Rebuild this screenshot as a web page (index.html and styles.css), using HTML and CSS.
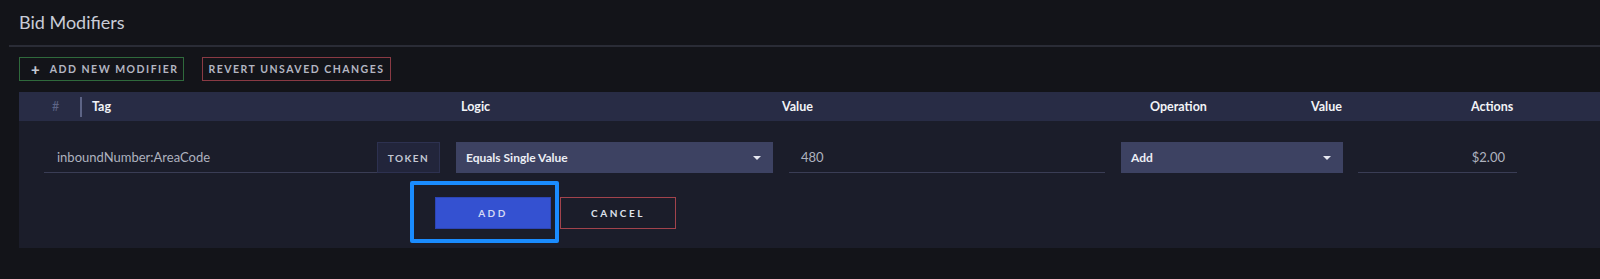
FILE: index.html
```html
<!DOCTYPE html>
<html>
<head>
<meta charset="utf-8">
<link rel="stylesheet" href="styles.css">
</head>
<body>
<div class="page">
  <h1 class="title">Bid Modifiers</h1>
  <div class="rule"></div>
  <div class="toolbar">
    <button class="btn btn-green"><span class="plus">+</span>ADD NEW MODIFIER</button>
    <button class="btn btn-red">REVERT UNSAVED CHANGES</button>
  </div>
  <div class="table">
    <div class="thead">
      <div class="th th-num">#</div>
      <div class="th-div"></div>
      <div class="th th-tag">Tag</div>
      <div class="th th-logic">Logic</div>
      <div class="th th-value">Value</div>
      <div class="th th-op">Operation</div>
      <div class="th th-value2">Value</div>
      <div class="th th-actions">Actions</div>
    </div>
    <div class="tbody">
      <div class="row">
        <div class="input tag-input">inboundNumber:AreaCode</div>
        <div class="token">TOKEN</div>
        <div class="select logic-select">Equals Single Value<span class="caret"></span></div>
        <div class="input value-input">480</div>
        <div class="select op-select">Add<span class="caret"></span></div>
        <div class="input money-input">$2.00</div>
      </div>
      <div class="actions-row">
        <div class="add-wrap">
          <button class="btn-add">ADD</button>
          <div class="focus-ring"></div>
        </div>
        <button class="btn-cancel">CANCEL</button>
      </div>
    </div>
  </div>
</div>
</body>
</html>
```
FILE: styles.css
```css
* { box-sizing: border-box; }
html, body {
  margin: 0;
  padding: 0;
  background: #131419;
  font-family: Lato, "Open Sans", sans-serif;
}
.page {
  width: 1600px;
  height: 279px;
  overflow: hidden;
}
.title {
  margin: 0;
  padding: 11px 0 0 19px;
  height: 45px;
  font-size: 18px;
  font-weight: 400;
  color: #c9ccd7;
  line-height: 22px;
}
.rule {
  margin-left: 9px;
  height: 2px;
  background: #2a2c36;
}
.toolbar {
  display: flex;
  gap: 18px;
  padding: 10px 0 0 19px;
  height: 45px;
}
.btn {
  height: 24px;
  background: transparent;
  font-family: Lato, sans-serif;
  font-weight: 700;
  font-size: 10.5px;
  letter-spacing: 1.5px;
  color: #b3b6c2;
  padding: 0 10px;
  display: flex;
  align-items: center;
  white-space: nowrap;
  cursor: pointer;
}
.btn-green {
  border: 1px solid #2f6a3c;
  width: 165px;
  padding-left: 11px;
}
.btn-red {
  border: 1px solid #8a3a44;
  width: 189px;
  justify-content: center;
}
.plus {
  font-size: 15px;
  font-weight: 900;
  margin-right: 10px;
  letter-spacing: 0;
  line-height: 1;
  color: #c4c7d2;
}
.table {
  margin-left: 19px;
  background: #1b1d2a;
  height: 156px;
}
.thead {
  display: flex;
  align-items: center;
  height: 29px;
  background: #282c45;
  color: #f2f3f7;
  font-weight: 700;
  font-size: 12.5px;
}
.th-num {
  width: 61px;
  padding-left: 33px;
  color: #5d6486;
  font-weight: 400;
}
.th-div {
  width: 2px;
  height: 20px;
  background: #5d6486;
}
.th-tag { width: 379px; padding-left: 10px; }
.th-logic { width: 321px; }
.th-value { width: 368px; }
.th-op { width: 161px; }
.th-value2 { width: 160px; }
.th-actions { flex: 1; }
.tbody {
  padding-top: 21px;
}
.row {
  display: flex;
  align-items: stretch;
  height: 31px;
  padding-left: 25px;
}
.input {
  border-bottom: 1px solid #3a3d55;
  color: #aeb2bf;
  font-size: 13px;
  display: flex;
  align-items: center;
  padding-bottom: 1px;
}
.tag-input { width: 333px; padding-left: 13px; }
.value-input { width: 316px; padding-left: 12px; margin-left: 16px; }
.money-input { width: 159px; justify-content: flex-end; padding-right: 12px; margin-left: 15px; }
.token {
  width: 63px;
  background: #22253b;
  border: 1px solid #2d3150;
  color: #c3c7d3;
  font-size: 10px;
  font-weight: 700;
  letter-spacing: 1.5px;
  display: flex;
  align-items: center;
  justify-content: center;
}
.select {
  background: #3d4262;
  color: #eceef5;
  font-size: 12px;
  font-weight: 700;
  display: flex;
  align-items: center;
  padding-left: 10px;
  position: relative;
}
.logic-select { width: 317px; margin-left: 16px; }
.op-select { width: 222px; margin-left: 16px; }
.caret {
  position: absolute;
  top: 14px;
  right: 12px;
  width: 0;
  height: 0;
  border-left: 4px solid transparent;
  border-right: 4px solid transparent;
  border-top: 4px solid #e6e8f0;
}
.actions-row {
  display: flex;
  gap: 9px;
  padding: 24px 0 0 416px;
}
.add-wrap {
  position: relative;
}
.btn-add {
  width: 116px;
  height: 32px;
  background: #3451d1;
  border: 1px solid #2c45b5;
  color: #d3d9f4;
  font-family: Lato, sans-serif;
  font-size: 10px;
  font-weight: 700;
  letter-spacing: 2.5px;
  display: block;
}
.btn-cancel {
  width: 116px;
  height: 32px;
  background: transparent;
  border: 1px solid #a2434c;
  color: #dfe1ea;
  font-family: Lato, sans-serif;
  font-size: 10px;
  font-weight: 700;
  letter-spacing: 2.5px;
}
.focus-ring {
  position: absolute;
  left: -25px;
  top: -16px;
  width: 149px;
  height: 62px;
  border: 4px solid #1a8cff;
  border-radius: 2px;
  pointer-events: none;
}
```
